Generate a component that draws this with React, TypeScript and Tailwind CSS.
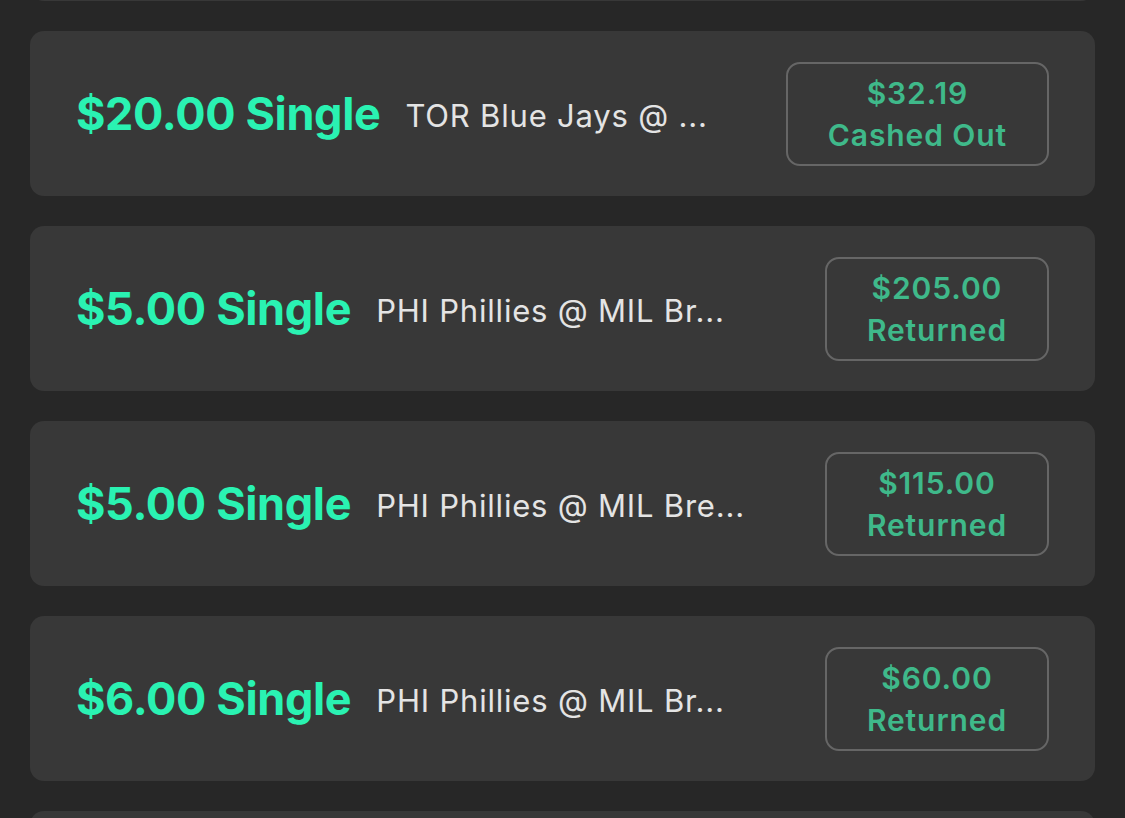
const bets = [
  { stake: "$20.00 Single", event: "TOR Blue Jays @ ...", amount: "$32.19", status: "Cashed Out" },
  { stake: "$5.00 Single", event: "PHI Phillies @ MIL Br...", amount: "$205.00", status: "Returned" },
  { stake: "$5.00 Single", event: "PHI Phillies @ MIL Bre...", amount: "$115.00", status: "Returned" },
  { stake: "$6.00 Single", event: "PHI Phillies @ MIL Br...", amount: "$60.00", status: "Returned" },
];

function BetCard({ stake, event, amount, status }: (typeof bets)[number]) {
  return (
    <div className="flex h-[165px] shrink-0 items-center justify-between rounded-[14px] bg-[#383838] pl-[46px] pr-[46px]">
      <div className="flex min-w-0 items-center gap-[25px]">
        <span className="whitespace-nowrap text-[45px] font-bold tracking-[-0.35px] text-[#2af2b2]">{stake}</span>
        <span className="whitespace-nowrap pt-[5px] text-[31px] tracking-[0.8px] text-[#e4e4e4]">{event}</span>
      </div>
      <div className="flex h-[104px] flex-col items-center justify-center rounded-[14px] border-2 border-[#666666] px-[40px] text-[30px] font-semibold leading-[42px] tracking-[0.9px] text-[#3fb98a]">
        <span>{amount}</span>
        <span className="whitespace-nowrap">{status}</span>
      </div>
    </div>
  );
}

export default function App() {
  return (
    <div className="h-[818px] overflow-hidden bg-[#272727] px-[30px] font-['Inter',sans-serif]">
      <div className="-mt-[164px] flex flex-col gap-[30px]">
        <div className="h-[165px] shrink-0 rounded-[14px] bg-[#383838]" />
        {bets.map((b, i) => (
          <BetCard key={i} {...b} />
        ))}
        <div className="h-[165px] shrink-0 rounded-[14px] bg-[#383838]" />
      </div>
    </div>
  );
}
